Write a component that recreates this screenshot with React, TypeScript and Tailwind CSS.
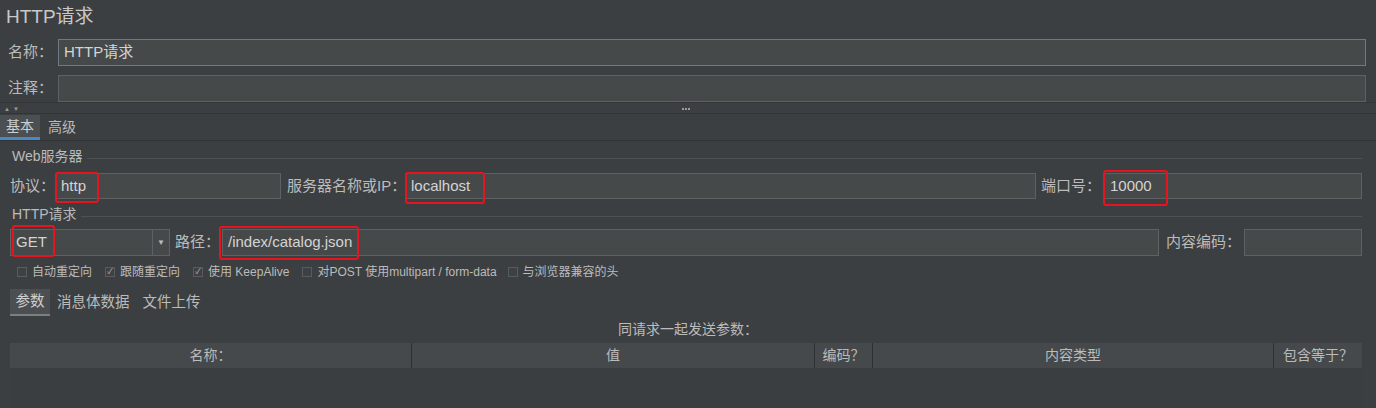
import React from "react";

const font = { fontFamily: '"Liberation Sans", "Noto Sans CJK SC", sans-serif' };

function RedBox({ className }: { className: string }) {
  // annotation box drawn over the field
  return <div className={"absolute border-2 border-[#e3151f] rounded-[3px] pointer-events-none " + className} />;
}

function Field({ value, className, children }: { value?: string; className: string; children?: React.ReactNode }) {
  return (
    <div className={"relative h-[26px] bg-[#45494a] border border-[#5e6162] flex items-center px-[5px] text-[15px] text-[#d4d4d4] " + className}>
      {value}
      {children}
    </div>
  );
}

function Check({ checked, label, className }: { checked?: boolean; label: string; className: string }) {
  return (
    <div className={"flex items-center gap-[5px] text-[12px] " + className}>
      <div className="w-[10px] h-[10px] border border-[#595c5e] bg-[#3e4143] flex items-center justify-center text-[8px] leading-none text-[#bbbbbb]">
        {checked ? "✓" : ""}
      </div>
      <span>{label}</span>
    </div>
  );
}

export default function App() {
  return (
    <div className="w-[1376px] h-[408px] bg-[#3c3f41] text-[#bbbbbb] overflow-hidden flex flex-col" style={font}>
      {/* title */}
      <div className="h-[39px] pl-[6px] pt-[4px] text-[19px] text-[#c8c8c8] leading-[26px]">HTTP请求</div>

      {/* name / comments */}
      <div className="flex items-center h-[27px]">
        <div className="w-[58px] pl-[8px] text-[15px]">名称：</div>
        <Field value="HTTP请求" className="flex-1 mr-[10px] h-[27px] border-[#6d7885] text-[14px]" />
      </div>
      <div className="h-[9px]" />
      <div className="flex items-center h-[27px]">
        <div className="w-[58px] pl-[8px] text-[15px]">注释：</div>
        <Field className="flex-1 mr-[10px] h-[27px]" />
      </div>

      {/* split divider */}
      <div className="h-[13px] shrink-0 relative border-t border-[#333537]">
        <div className="flex gap-[3px] pl-[4px] pt-[3px] text-[6px] leading-none text-[#9a9a9a]">
          <span>▲</span>
          <span>▼</span>
        </div>
        <div className="absolute left-[682px] top-[5px] flex gap-[1px]">
          <div className="w-[2px] h-[2px] bg-[#9a9a9a]" />
          <div className="w-[2px] h-[2px] bg-[#9a9a9a]" />
          <div className="w-[2px] h-[2px] bg-[#9a9a9a]" />
        </div>
        <div className="absolute left-0 right-0 bottom-[1px] border-t border-[#323436]" />
      </div>

      {/* tabs */}
      <div className="flex items-end h-[26px] shrink-0 border-b border-[#323436] text-[14px]">
        <div className="w-[40px] h-[25px] bg-[#4b4f52] border-b-[3px] border-[#4a88c7] pl-[6px] flex items-center text-[#cfcfcf]">基本</div>
        <div className="h-[25px] pl-[8px] flex items-center">高级</div>
      </div>

      {/* web server group */}
      <div className="flex items-center h-[31px] shrink-0 pl-[12px] pr-[14px] text-[14px]">
        <span className="pr-[4px]">Web服务器</span>
        <div className="flex-1 border-t border-[#4e5254] mt-[4px]" />
      </div>
      <div className="flex items-center h-[26px] mt-[1px] shrink-0">
        <div className="w-[55px] pl-[10px] text-[15px]">协议：</div>
        <Field value="http" className="w-[226px]">
          <RedBox className="left-[-1px] top-[-2px] w-[44px] h-[31px]" />
        </Field>
        <div className="w-[124px] pl-[6px] text-[15px] whitespace-nowrap">服务器名称或IP：</div>
        <Field value="localhost" className="w-[631px]">
          <RedBox className="left-[-1px] top-[-2px] w-[80px] h-[32px]" />
        </Field>
        <div className="w-[68px] pl-[5px] text-[15px] whitespace-nowrap">端口号：</div>
        <Field value="10000" className="flex-1 mr-[14px] border-[#3d6a96]">
          <RedBox className="left-[-2px] top-[-4px] w-[65px] h-[36px]" />
        </Field>
      </div>

      {/* http request group */}
      <div className="flex items-center h-[30px] shrink-0 pl-[12px] pr-[14px] text-[14px]">
        <span className="pr-[4px]">HTTP请求</span>
        <div className="flex-1 border-t border-[#4e5254] mt-[4px]" />
      </div>
      <div className="flex items-center h-[27px] shrink-0">
        <div className="ml-[10px] w-[160px] h-[27px] relative bg-[#45494a] border border-[#5e6162] flex text-[15px] text-[#d4d4d4]">
          <div className="flex-1 flex items-center pl-[5px]">GET</div>
          <div className="w-[17px] border-l border-[#5e6162] flex items-center justify-center text-[8px] text-[#bbbbbb]">▼</div>
          <RedBox className="left-[1px] top-[-5px] w-[43px] h-[32px]" />
        </div>
        <div className="w-[52px] pl-[5px] text-[15px] whitespace-nowrap">路径：</div>
        <Field value="/index/catalog.json" className="w-[937px] h-[27px]">
          <RedBox className="left-[-4px] top-[-4px] w-[140px] h-[34px]" />
        </Field>
        <div className="w-[85px] pl-[7px] text-[15px] whitespace-nowrap">内容编码：</div>
        <Field className="flex-1 mr-[14px] h-[27px]" />
      </div>

      {/* options */}
      <div className="flex items-center h-[33px] shrink-0 pb-[2px]">
        <Check label="自动重定向" className="ml-[17px]" />
        <Check checked label="跟随重定向" className="ml-[13px]" />
        <Check checked label="使用 KeepAlive" className="ml-[13px]" />
        <Check label="对POST 使用multipart / form-data" className="ml-[13px]" />
        <Check label="与浏览器兼容的头" className="ml-[11px]" />
      </div>

      {/* sub tabs */}
      <div className="flex items-end h-[27px] shrink-0 text-[14.5px]">
        <div className="ml-[10px] w-[40px] h-[27px] bg-[#4b4f52] border-b-2 border-[#7b7f82] flex items-center justify-center text-[#cfcfcf]">参数</div>
        <div className="h-[27px] pl-[7px] flex items-center">消息体数据</div>
        <div className="h-[27px] pl-[13px] flex items-center">文件上传</div>
      </div>

      <div className="h-[27px] shrink-0 flex items-center justify-center text-[14px]">同请求一起发送参数：</div>

      {/* table */}
      <div className="mr-[14px] ml-[10px] h-[25px] shrink-0 flex bg-[#45494b] text-[14px]">
        <div className="w-[402px] flex items-center justify-center border-r border-[#2e3032]">名称：</div>
        <div className="w-[403px] flex items-center justify-center border-r border-[#2e3032]">值</div>
        <div className="w-[58px] flex items-center justify-center border-r border-[#2e3032]">编码？</div>
        <div className="w-[401px] flex items-center justify-center border-r border-[#2e3032]">内容类型</div>
        <div className="flex-1 flex items-center justify-center">包含等于？</div>
      </div>
      <div className="flex-1 mr-[14px] ml-[10px] bg-[#3b3e40]" />
    </div>
  );
}
